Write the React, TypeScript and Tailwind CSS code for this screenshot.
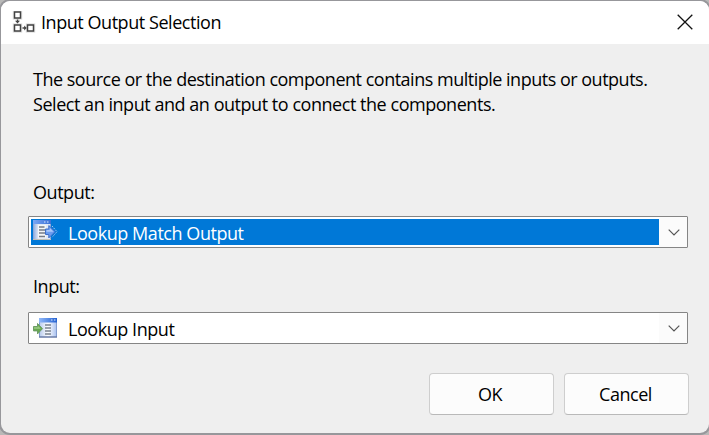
import React from 'react';

function ConnectIcon() {
  return (
    <svg width="24" height="24" viewBox="0 0 24 24" fill="none" className="shrink-0">
      <g stroke="#e2e2e2" strokeWidth="3.5">
        <rect x="2.500" y="1" width="6" height="6" />
        <rect x="2.500" y="14" width="6" height="6" />
        <rect x="15.500" y="14" width="6" height="6" />
      </g>
      <g stroke="#424242" strokeWidth="1.5" fill="#fff">
        <rect x="2.500" y="1" width="6" height="6" />
        <rect x="2.500" y="14" width="6" height="6" />
        <rect x="15.500" y="14" width="6" height="6" />
      </g>
      <path d="M4.800 8.500h1.500v1.300H8L5.500 12.500 3 9.800h1.800zM10.500 16.200h1.700v-1.700l2.500 2.500-2.500 2.500v-1.700h-1.700z" fill="#424242" />
    </svg>
  );
}

function OutputIcon() {
  return (
    <svg width="25" height="22" viewBox="0 0 25 22" className="shrink-0">
      <defs>
        <linearGradient id="outBar" x1="0" x2="1">
          <stop stopColor="#7ca8f4" />
          <stop offset="1" stopColor="#3a6fd6" />
        </linearGradient>
        <linearGradient id="outPage" x1="0" x2="1">
          <stop stopColor="#8fade2" />
          <stop offset="0.3" stopColor="#e6ebf5" />
          <stop offset="1" stopColor="#dde6f6" />
        </linearGradient>
      </defs>
      <rect x="0.500" y="1.500" width="17" height="19" fill="url(#outPage)" stroke="#8fa8d8" />
      <rect x="0" y="1" width="18" height="4" fill="url(#outBar)" />
      <path d="M11 3h1.500M14 3h1.500" stroke="#dce9ff" />
      <path d="M5 6h8v13H5z" fill="#f4f5f7" />
      <path d="M6 8h5.500M6 11h6M6 14h6M6 17.500h6" stroke="#747b88" strokeWidth="1.500" />
      <path d="M0 20.500h18" stroke="#c2c1b8" />
      <path d="M12.500 10h3.300V6.500l6.200 6.200-6.200 6.200v-3.400h-3.300z" fill="#6a9cf0" stroke="#3f70cc" />
      <path d="M13.500 11h3.300V9l3.700 3.700h-7z" fill="#a9c8fb" />
      <path d="M19 7l5 5.700-5 5.700" stroke="#a9c6f2" strokeDasharray="1.500 1" fill="none" />
    </svg>
  );
}

function InputIcon() {
  return (
    <svg width="25" height="22" viewBox="0 0 25 22" className="shrink-0">
      <defs>
        <linearGradient id="inBar" x1="0" x2="1">
          <stop stopColor="#91b9fa" />
          <stop offset="1" stopColor="#2461d0" />
        </linearGradient>
        <linearGradient id="inPage" x1="0" x2="1">
          <stop stopColor="#b8cbed" />
          <stop offset="0.500" stopColor="#fff" />
          <stop offset="1" stopColor="#a9c1ef" />
        </linearGradient>
      </defs>
      <rect x="6.500" y="1.500" width="17" height="18.500" fill="url(#inPage)" stroke="#819bcf" />
      <rect x="6" y="1" width="18" height="4.500" fill="url(#inBar)" />
      <path d="M18 3h1.500M21 3h1.500" stroke="#dce9ff" />
      <path d="M12 8h6M12 11h6M12 14h6M12 17h6" stroke="#7a828e" strokeWidth="1.600" />
      <path d="M6 20h18" stroke="#5d6d94" />
      <path d="M.5 9.500h4V6.500l5 5.200-5 5.200v-3H.5z" fill="#68a952" stroke="#6d9c66" />
      <path d="M1 10.300h4.200V9l2.600 2.700H1z" fill="#9ccc85" />
    </svg>
  );
}

function ComboBox({ icon, selected, children }: { icon: React.ReactNode; selected?: boolean; children: React.ReactNode }) {
  return (
    <div className="flex h-8 w-[660px] rounded-[1px] border border-[#858585] bg-white">
      <div className={`my-0.5 ml-0.5 flex w-[628px] items-center pl-0.5 ${selected ? 'bg-[#0078d7] text-white' : 'text-black'}`}>
        <div className={selected ? '-mt-1' : '-mt-px'}>{icon}</div>
        <div className="mt-[3px] ml-[10px]">{children}</div>
      </div>
      <div className="flex flex-1 items-center justify-center bg-[#fbfbfb] pl-0.5">
        <svg width="12" height="7" viewBox="0 0 12 7" fill="none">
          <path d="M.7.7 6 6 11.300.7" stroke="#555" strokeWidth="1.200" />
        </svg>
      </div>
    </div>
  );
}

export default function App() {
  return (
    <div className="h-[435px] w-[709px] overflow-hidden bg-[#b9b9b8] pl-px pt-px font-['Open_Sans','Noto_Sans',sans-serif] text-[18px] leading-[25px] tracking-[-0.450px] whitespace-nowrap text-black">
      <div className="flex h-[432px] w-[708px] flex-col overflow-hidden rounded-[9px] bg-[#efefef] shadow-[0_0_0_2px_#97979b]">
        <header className="flex h-[43px] shrink-0 items-center bg-white pl-[11px]">
          <ConnectIcon />
          <h1 className="ml-[5px]">Input Output Selection</h1>
          <svg width="16" height="16" viewBox="0 0 16 16" className="mt-[-2px] mr-4 ml-auto">
            <path d="m.7.700 14.600 14.600M15.300.700.700 15.300" stroke="#111" strokeWidth="1.300" />
          </svg>
        </header>
        <main className="flex flex-col pl-[27px]">
          <div className="mt-[23px] pl-[5px]">
            <p className="tracking-[-0.495px]">The source or the destination component contains multiple inputs or outputs.</p>
            <p className="tracking-[-0.460px]">Select an input and an output to connect the components.</p>
          </div>
          <div className="mt-[63px] mb-[11px] pl-[5px]">Output:</div>
          <ComboBox icon={<OutputIcon />} selected>Lookup Match Output</ComboBox>
          <div className="mt-[26px] mb-[13px] pl-[5px]">Input:</div>
          <ComboBox icon={<InputIcon />}>Lookup Input</ComboBox>
          <div className="mt-[29px] ml-[401px] flex gap-[10px]">
            <button className="h-[42px] w-[125px] rounded-[4px] border border-[#cecece] border-b-[#b9b9b9] bg-[#fcfcfc] pr-[3px] tracking-[-0.450px]">OK</button>
            <button className="h-[42px] w-[125px] rounded-[4px] border border-[#cecece] border-b-[#b9b9b9] bg-[#fcfcfc] pr-0.5 tracking-[-0.450px]">Cancel</button>
          </div>
        </main>
      </div>
    </div>
  );
}
